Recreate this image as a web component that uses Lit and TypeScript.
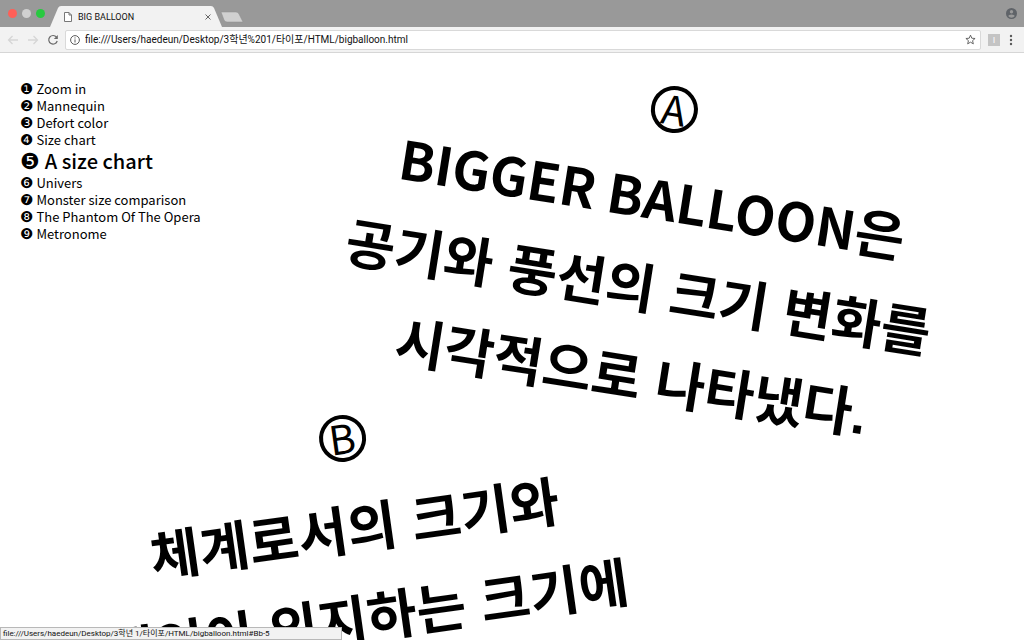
import { LitElement, html, css } from "lit";
import { customElement, state } from "lit/decorators.js";

const chapters = [
  ["❶", "Zoom in"],
  ["❷", "Mannequin"],
  ["❸", "Defort color"],
  ["❹", "Size chart"],
  ["❺", "A size chart"],
  ["❻", "Univers"],
  ["❼", "Monster size comparison"],
  ["❽", "The Phantom Of The Opera"],
  ["❾", "Metronome"],
];

@customElement("browser-bar")
class BrowserBar extends LitElement {
  static styles = css`
    :host { display: block; font: 10px/14px Roboto, "Noto Sans CJK KR", sans-serif; color: #222; }
    button { border: 0; padding: 0; margin: 0; background: none; display: grid; place-items: center; }
    svg { display: block; }
    .tabs { display: flex; align-items: center; height: 27px; padding: 0 7px 0 8px; background: #999; }
    .lights { display: flex; gap: 5px; }
    .light { width: 9px; height: 9px; border-radius: 50%; }
    .red { background: #ff5f57; }
    .grey { background: #d0d0d0; }
    .green { background: #28c940; }
    .tab { display: grid; width: 172px; align-self: stretch; padding-top: 6px; box-sizing: border-box; margin-left: 5px; }
    .tab > * { grid-area: 1 / 1; }
    .title { display: flex; align-items: center; gap: 6px; padding: 0 11px 0 14px; font-size: 9px; color: #111; }
    .title span { flex: 1; }
    .new { align-self: flex-end; margin: 0 0 4px -2px; }
    .profile { margin-left: auto; }
    .tools { display: flex; align-items: center; height: 26px; box-sizing: border-box; padding: 0 8px 0 7px; background: #f2f2f2; border-bottom: 1px solid #d6d6d6; }
    .nav { display: flex; gap: 8px; margin-right: 6px; }
    .address { display: flex; flex: 1; align-items: center; gap: 5px; height: 20px; box-sizing: border-box; padding: 0 4px; background: #fff; border: 1px solid #d9d9d9; border-radius: 2px; margin-right: 7px; }
    .address input { flex: 1; min-width: 0; border: 0; outline: 0; padding: 0; background: none; font: inherit; color: #111; }
    .ext { width: 12px; height: 12px; background: #c4c4c4; color: #fff; font-size: 9px; line-height: 12px; margin-right: 6px; }
  `;
  render() {
    return html`
      <div class="tabs">
        <div class="lights">
          <span class="light red"></span><span class="light grey"></span><span class="light green"></span>
        </div>
        <div class="tab">
          <svg width="172" height="21" viewBox="0 0 172 21"><path d="M0 21L8 2Q9 0 11 0H161Q163 0 164 2L172 21Z" fill="#f2f2f2" /></svg>
          <div class="title">
            <svg width="8" height="10" viewBox="0 0 8 10"><path d="M.5 .5H5L7.500 3V9.500H.5ZM5 .5V3H7.500" fill="#fff" stroke="#777" /></svg>
            <span>BIG BALLOON</span>
            <button aria-label="Close tab"><svg width="6" height="6" viewBox="0 0 6 6"><path d="M.5 .5L5.500 5.500M5.500 .5L.5 5.500" stroke="#666" /></svg></button>
          </div>
        </div>
        <button class="new" aria-label="New tab"><svg width="24" height="12" viewBox="0 0 24 12"><path d="M1 1H16Q18 1 19 3L23 11H7Q5 11 4 9Z" fill="#d0d0d0" stroke="#8d8d8d" stroke-width=".5" /></svg></button>
        <button class="profile" aria-label="Profile"><svg width="11" height="11" viewBox="0 0 11 11"><circle cx="5.500" cy="5.500" r="5.500" fill="#5f6368" /><circle cx="5.500" cy="3.800" r="1.700" fill="#999" /><path d="M2.200 8Q2.500 6.400 5.500 6.400T8.800 8Q7.600 9.700 5.500 9.700T2.200 8Z" fill="#999" /></svg></button>
      </div>
      <div class="tools">
        <div class="nav">
          <button aria-label="Back"><svg width="12" height="10" viewBox="0 0 12 10"><path d="M11 5H1.500M5.500 1L1.500 5L5.500 9" fill="none" stroke="#d6d6d6" stroke-width="1.300" /></svg></button>
          <button aria-label="Forward"><svg width="12" height="10" viewBox="0 0 12 10"><path d="M1 5H10.500M6.500 1L10.500 5L6.500 9" fill="none" stroke="#d6d6d6" stroke-width="1.300" /></svg></button>
          <button aria-label="Reload"><svg width="12" height="12" viewBox="0 0 12 12"><path d="M9.500 3.200A4.300 4.300 0 1 0 10.200 7" fill="none" stroke="#6a6a6a" stroke-width="1.200" /><path d="M10.800 1V5H6.800Z" fill="#6a6a6a" /></svg></button>
        </div>
        <div class="address">
          <svg width="10" height="10" viewBox="0 0 10 10"><circle cx="5" cy="5" r="4.400" fill="none" stroke="#5a5a5a" /><path d="M5 4.400V7.500M5 2.400V3.500" stroke="#5a5a5a" /></svg>
          <input aria-label="Address" value="file:///Users/haedeun/Desktop/3학년%201/타이포/HTML/bigballoon.html" />
          <button aria-label="Bookmark"><svg width="11" height="11" viewBox="0 0 24 24"><path d="M12 2.500L14.800 9.200L22 9.800L16.500 14.500L18.200 21.500L12 17.800L5.800 21.500L7.500 14.500L2 9.800L9.200 9.200Z" fill="none" stroke="#5a5a5a" stroke-width="2" /></svg></button>
        </div>
        <button class="ext" aria-label="Extension">I</button>
        <button aria-label="Menu"><svg width="10" height="12" viewBox="0 0 10 12"><g fill="#5a5a5a"><circle cx="5" cy="2" r="1.200" /><circle cx="5" cy="6" r="1.200" /><circle cx="5" cy="10" r="1.200" /></g></svg></button>
      </div>
    `;
  }
}

@customElement("app-root")
class AppRoot extends LitElement {
  @state() current = 4;

  static styles = css`
    :host { display: flex; flex-direction: column; height: 100vh; overflow: hidden; background: #fff; color: #000; font-family: "Noto Sans CJK KR", sans-serif; }
    main { position: relative; flex: 1; min-height: 0; overflow: hidden; }
    nav { display: inline-flex; flex-direction: column; padding: 27px 20px; font-size: 13px; line-height: 17px; }
    nav a { display: flex; align-items: center; gap: 3px; color: inherit; text-decoration: none; white-space: nowrap; }
    .mark { padding-top: 2px; font-family: "DejaVu Sans", sans-serif; font-size: 15px; line-height: 15px; }
    nav .current { font-size: 20px; line-height: 26px; font-weight: 500; gap: 5px; }
    .current .mark { font-size: 22px; line-height: 22px; }
    .balloon { position: absolute; display: flex; flex-direction: column; align-items: center; width: 600px; text-align: center; font-size: 54px; line-height: 90px; font-weight: 700; }
    .balloon p { margin: 0; white-space: nowrap; font-family: "Liberation Sans", "Noto Sans CJK KR", sans-serif; }
    .latin { font-family: "Noto Sans CJK KR", sans-serif; font-size: 53px; line-height: 53px; }
    .letter { width: 47px; height: 47px; box-sizing: border-box; border: 4px solid; border-radius: 50%; font-size: 40px; line-height: 36px; font-weight: 400; margin-bottom: 24px; }
    .a { left: 374px; top: 33px; transform-origin: 50% 23px; transform: rotate(9deg); }
    .b { left: 42px; top: 362px; transform-origin: 50% 23px; transform: rotate(-8deg); }
    .status { position: absolute; left: 0; bottom: 0; width: 342px; height: 13px; box-sizing: border-box; padding: 0 2px; border: 1px solid #b8b8b8; background: #f2f2f2; color: #111; font: 8px/11px Roboto, "Noto Sans CJK KR", sans-serif; }
  `;
  render() {
    return html`
      <browser-bar></browser-bar>
      <main>
        <nav>
          ${chapters.map(([mark, name], i) => html`
            <a href="#Bb-${i + 1}" class=${i === this.current ? "current" : ""} @click=${() => (this.current = i)}><span class="mark">${mark}</span>${name}</a>`)}
        </nav>
        <section class="balloon a">
          <span class="letter">A</span>
          <p><span class="latin">BIGGER BALLOON</span>은&nbsp;</p>
          <p>공기와 풍선의 크기 변화를&nbsp;</p>
          <p>시각적으로 나타냈다.</p>
        </section>
        <section class="balloon b">
          <span class="letter">B</span>
          <p>체계로서의 크기와</p>
          <p>개인이 의지하는 크기에</p>
        </section>
        <div class="status">file:///Users/haedeun/Desktop/3학년 1/타이포/HTML/bigballoon.html#Bb-5</div>
      </main>
    `;
  }
}
